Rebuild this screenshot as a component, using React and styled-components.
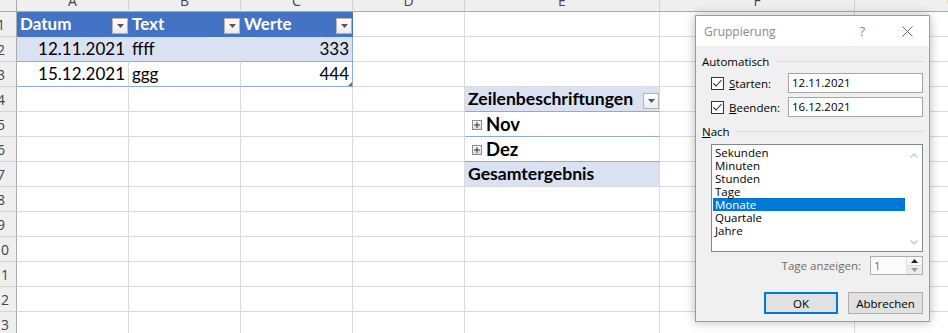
import React from "react";
import styled, { createGlobalStyle } from "styled-components";

const GRID = "#dadada";
const BLUE = "#4472C4";
const BAND = "#D9E1F2";
const LINE = "#8EA9DB";

const COLS = ["A", "B", "C", "D", "E", "F", "G"];
const WIDTHS = [31, 112, 112, 112, 112, 195, 195, 195];
const ROW_COUNT = 13;

const head = { fill: BLUE, color: "#fff", bold: true, right: BLUE, bottom: BLUE, filter: true };
const band = { fill: BAND, right: BAND, bottom: LINE };
const plain = { bottom: LINE };

const rows = {
  1: { A: { ...head, text: "Datum" }, B: { ...head, text: "Text" }, C: { ...head, text: "Werte" } },
  2: {
    A: { ...band, text: "12.11.2021", align: "right" },
    B: { ...band, text: "ffff" },
    C: { ...band, right: LINE, text: "333", align: "right" },
  },
  3: {
    A: { ...plain, text: "15.12.2021", align: "right" },
    B: { ...plain, text: "ggg" },
    C: { ...plain, right: LINE, text: "444", align: "right", handle: true },
  },
  4: { E: { fill: BAND, bottom: LINE, bold: true, size: 17.6, text: "Zeilenbeschriftungen", filter: true } },
  5: { E: { bottom: LINE, bold: true, size: 18.5, text: "Nov", expand: true } },
  6: { E: { bottom: LINE, bold: true, size: 18.5, text: "Dez", expand: true } },
  7: { E: { fill: BAND, bold: true, size: 17.6, text: "Gesamtergebnis" } },
};

const units = ["Sekunden", "Minuten", "Stunden", "Tage", "Monate", "Quartale", "Jahre"];

const GlobalStyle = createGlobalStyle`
  html, body {
    margin: 0;
    padding: 0;
    background: #fff;
    overflow: hidden;
  }
`;

const Page = styled.div`
  position: relative;
  width: 948px;
  height: 333px;
  overflow: hidden;
  font-family: "Lato", "Liberation Sans", sans-serif;
`;

const Sheet = styled.div`
  display: grid;
  grid-template-columns: ${WIDTHS.map((w) => w + "px").join(" ")};
  grid-template-rows: 23px repeat(${ROW_COUNT}, 25px);
  margin: -11px 0 0 -14px;
`;

const ColHead = styled.div`
  box-sizing: border-box;
  background: #efefef;
  border-bottom: 1px solid #ababab;
  border-right: 1px solid ${(p) => (p.$corner ? "#ababab" : "#d4d4d4")};
  font-family: "Open Sans", "Noto Sans", sans-serif;
  font-size: 14px;
  color: #444;
  text-align: center;
  padding-top: 2px;
  line-height: 20px;
`;

const RowHead = styled.div`
  box-sizing: border-box;
  background: #efefef;
  border-right: 1px solid #ababab;
  border-bottom: 1px solid #d4d4d4;
  font-family: "Open Sans", "Noto Sans", sans-serif;
  font-size: 14px;
  color: #444;
  text-align: center;
  line-height: 25px;
`;

const Cell = styled.div`
  box-sizing: border-box;
  position: relative;
  display: flex;
  align-items: center;
  justify-content: ${(p) => (p.$align === "right" ? "flex-end" : "flex-start")};
  padding: 0 ${(p) => (p.$tight ? 0 : 3)}px 0 3px;
  background: ${(p) => p.$fill || "#fff"};
  border-right: 1px solid ${(p) => p.$right || GRID};
  border-bottom: 1px solid ${(p) => p.$bottom || GRID};
  color: ${(p) => p.$color || "#000"};
  font-weight: ${(p) => (p.$bold ? 700 : 400)};
  font-size: ${(p) => p.$size || 17}px;
  line-height: 24px;
  white-space: nowrap;
`;

const FilterBox = styled.span`
  box-sizing: border-box;
  width: 16px;
  height: 16px;
  margin-left: auto;
  align-self: flex-end;
  margin-bottom: 2px;
  border: 1px solid #b4b4b4;
  background: linear-gradient(#ffffff, #ebebeb);
  display: flex;
  align-items: center;
  justify-content: center;
`;

const PlusBox = styled.span`
  box-sizing: border-box;
  width: 10px;
  height: 10px;
  margin: 2px 4px 0 4px;
  border: 1px solid #8c8c8c;
  background: linear-gradient(#fafafa, #dedede);
  display: flex;
  align-items: center;
  justify-content: center;
`;

const Handle = styled.span`
  position: absolute;
  right: 0;
  bottom: 0;
  width: 4px;
  height: 4px;
  background: ${BLUE};
  clip-path: polygon(100% 0, 100% 100%, 0 100%);
`;

/* ---------- dialog ---------- */

const Dialog = styled.div`
  position: absolute;
  left: 695px;
  top: 15px;
  width: 235px;
  height: 307px;
  box-sizing: border-box;
  border: 1px solid #9b9b9b;
  background: #f0f0f0;
  box-shadow: 0 0 10px rgba(0, 0, 0, 0.28);
  display: flex;
  flex-direction: column;
  font-family: "Open Sans", "Noto Sans", sans-serif;
  font-size: 11.5px;
  color: #000;
`;

const TitleBar = styled.div`
  height: 30px;
  background: #fff;
  display: flex;
  align-items: center;
  padding-left: 8px;
`;

const Title = styled.div`
  flex: 1;
  color: #8a8a8a;
  font-size: 12px;
`;

const Help = styled.div`
  color: #8a8a8a;
  font-size: 13px;
  margin-right: 37px;
`;

const Close = styled.div`
  display: flex;
  margin-right: 16px;
`;

const Body = styled.div`
  flex: 1;
  display: flex;
  flex-direction: column;
  padding: 7px 6px 0 6px;
`;

const Legend = styled.div`
  display: flex;
  align-items: center;
  gap: 7px;
  height: 16px;
  margin-top: ${(p) => p.$top || 0}px;
  &::after {
    content: "";
    flex: 1;
    height: 1px;
    background: #dcdcdc;
  }
`;

const FieldRow = styled.div`
  display: flex;
  align-items: center;
  height: 20px;
  margin: ${(p) => p.$top}px 0 0 9px;
`;

const Check = styled.span`
  box-sizing: border-box;
  width: 13px;
  height: 13px;
  border: 1px solid #333;
  background: #fff;
  display: flex;
  margin-right: 5px;
`;

const FieldLabel = styled.span`
  flex: 1;
`;

const TextInput = styled.div`
  box-sizing: border-box;
  width: 135px;
  height: 20px;
  border: 1px solid #a5a5a5;
  background: #fff;
  padding-left: 3px;
  line-height: 18px;
`;

const ListBox = styled.div`
  box-sizing: border-box;
  display: flex;
  width: 212px;
  height: 108px;
  margin: 5px 0 0 9px;
  border: 1px solid #828790;
  background: #fff;
`;

const Items = styled.div`
  flex: 1;
  padding: 1px 0 0 1px;
`;

const Item = styled.div`
  height: 13px;
  line-height: 13px;
  padding-left: 2px;
  background: ${(p) => (p.$selected ? "#0078D7" : "transparent")};
  color: ${(p) => (p.$selected ? "#fff" : "#000")};
`;

const ScrollTrack = styled.div`
  width: 17px;
  display: flex;
  flex-direction: column;
  justify-content: space-between;
  align-items: center;
  padding: 8px 0 6px;
`;

const SpinRow = styled.div`
  display: flex;
  justify-content: flex-end;
  align-items: center;
  gap: 9px;
  height: 19px;
  margin-top: 4px;
  color: #6d6d6d;
`;

const SpinBox = styled.div`
  box-sizing: border-box;
  width: 53px;
  height: 19px;
  border: 1px solid #adadad;
  background: #fbfbfb;
  display: flex;
`;

const SpinValue = styled.div`
  flex: 1;
  padding-left: 3px;
  line-height: 17px;
  color: #6d6d6d;
`;

const SpinButtons = styled.div`
  width: 15px;
  display: flex;
  flex-direction: column;
  border-left: 1px solid #e3e3e3;
`;

const SpinButton = styled.div`
  flex: 1;
  display: flex;
  align-items: center;
  justify-content: center;
  background: ${(p) => (p.$down ? "#ececec" : "#f8f8f8")};
  border-top: ${(p) => (p.$down ? "1px solid #d8d8d8" : "none")};
`;

const ButtonRow = styled.div`
  display: flex;
  justify-content: flex-end;
  gap: 10px;
  margin-top: 17px;
`;

const Button = styled.div`
  box-sizing: border-box;
  width: ${(p) => p.$w}px;
  height: 22px;
  background: #e1e1e1;
  border: ${(p) => (p.$primary ? "2px solid #0078D7" : "1px solid #adadad")};
  display: flex;
  align-items: center;
  justify-content: center;
`;

const Tri = ({ down = true, color = "#555" }) => (
  <svg width="7" height="4" viewBox="0 0 7 4">
    <path d={down ? "M0 0h7L3.5 4z" : "M0 4h7L3.5 0z"} fill={color} />
  </svg>
);

const Chevron = ({ up }) => (
  <svg width="8" height="5" viewBox="0 0 8 5">
    <polyline
      points={up ? "0.5,4.5 4,1 7.5,4.5" : "0.5,0.5 4,4 7.5,0.5"}
      fill="none"
      stroke="#c2c2c2"
      strokeWidth="1.2"
    />
  </svg>
);

const CheckMark = () => (
  <svg width="11" height="11" viewBox="0 0 11 11">
    <polyline points="1.5,5.5 4,8 9.5,2" fill="none" stroke="#333" strokeWidth="1.1" />
  </svg>
);

const renderCell = (r, col) => {
  const c = (rows[r] && rows[r][col]) || {};
  return (
    <Cell
      key={col + r}
      $fill={c.fill}
      $right={c.right}
      $bottom={c.bottom}
      $color={c.color}
      $bold={c.bold}
      $size={c.size}
      $align={c.align}
      $tight={c.filter}
    >
      {c.expand && (
        <PlusBox>
          <svg width="6" height="6" viewBox="0 0 6 6">
            <path d="M0 3h6M3 0v6" stroke="#333" strokeWidth="1" />
          </svg>
        </PlusBox>
      )}
      {c.text && <span>{c.text}</span>}
      {c.filter && (
        <FilterBox>
          <Tri />
        </FilterBox>
      )}
      {c.handle && <Handle />}
    </Cell>
  );
};

export default function App() {
  const rowNums = Array.from({ length: ROW_COUNT }, (_, i) => i + 1);
  return (
    <Page>
      <GlobalStyle />
      <Sheet>
        <ColHead $corner />
        {COLS.map((c) => (
          <ColHead key={c}>{c}</ColHead>
        ))}
        {rowNums.map((r) => (
          <React.Fragment key={r}>
            <RowHead>{r}</RowHead>
            {COLS.map((col) => renderCell(r, col))}
          </React.Fragment>
        ))}
      </Sheet>

      <Dialog>
        <TitleBar>
          <Title>Gruppierung</Title>
          <Help>?</Help>
          <Close>
            <svg width="11" height="11" viewBox="0 0 11 11">
              <path d="M0.5 0.5l10 10M10.5 0.5l-10 10" stroke="#666" strokeWidth="1" />
            </svg>
          </Close>
        </TitleBar>
        <Body>
          <Legend>Automatisch</Legend>
          <FieldRow $top={4}>
            <Check>
              <CheckMark />
            </Check>
            <FieldLabel>
              <u>S</u>tarten:
            </FieldLabel>
            <TextInput>12.11.2021</TextInput>
          </FieldRow>
          <FieldRow $top={4}>
            <Check>
              <CheckMark />
            </Check>
            <FieldLabel>
              <u>B</u>eenden:
            </FieldLabel>
            <TextInput>16.12.2021</TextInput>
          </FieldRow>
          <Legend $top={6}>
            <span>
              <u>N</u>ach
            </span>
          </Legend>
          <ListBox>
            <Items>
              {units.map((u) => (
                <Item key={u} $selected={u === "Monate"}>
                  {u}
                </Item>
              ))}
            </Items>
            <ScrollTrack>
              <Chevron up />
              <Chevron />
            </ScrollTrack>
          </ListBox>
          <SpinRow>
            <span>Tage anzeigen:</span>
            <SpinBox>
              <SpinValue>1</SpinValue>
              <SpinButtons>
                <SpinButton>
                  <Tri down={false} color="#222" />
                </SpinButton>
                <SpinButton $down>
                  <Tri color="#999" />
                </SpinButton>
              </SpinButtons>
            </SpinBox>
          </SpinRow>
          <ButtonRow>
            <Button $primary $w={74}>
              OK
            </Button>
            <Button $w={75}>Abbrechen</Button>
          </ButtonRow>
        </Body>
      </Dialog>
    </Page>
  );
}
